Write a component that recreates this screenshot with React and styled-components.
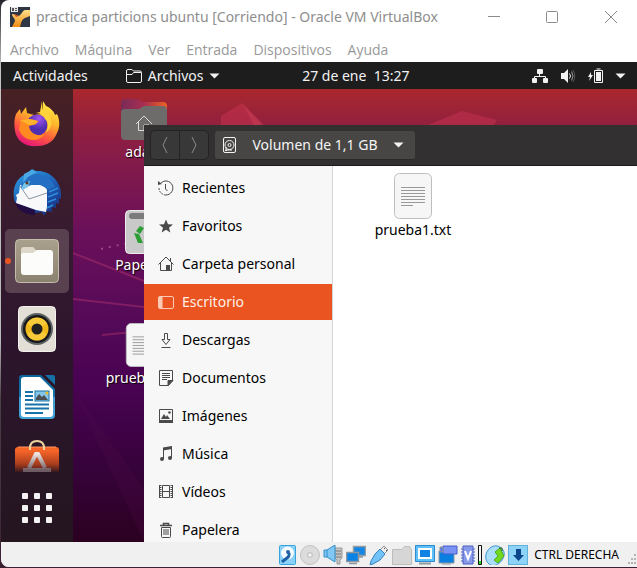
import React from "react";
import styled, { createGlobalStyle, css } from "styled-components";

const ubuntu = '"Noto Sans", "Open Sans", sans-serif';
const segoe = '"Open Sans", "Noto Sans", sans-serif';

const GlobalStyle = createGlobalStyle`
  *, *::before, *::after { box-sizing: border-box; }
  body { margin: 0; background: #3a2030; overflow: hidden; }
  button { border: 0; background: none; padding: 0; font: inherit; color: inherit; }
  svg { display: block; flex: none; }
  ul { list-style: none; margin: 0; padding: 0; }
`;

const Backdrop = styled.div`
  display: flex;
  min-height: 100vh;
  padding: 0 0 1px 1px;
  background: linear-gradient(#24222b, #c4c4c4 12%, #b9b9b9 60%, #4b4248 70%, #3b2033);
`;
const VmWindow = styled.div`
  flex: 1;
  min-width: 0;
  display: flex;
  flex-direction: column;
  overflow: hidden;
  border-radius: 8px 0 0 8px;
  background: #fff;
`;

const TitleBar = styled.header`
  display: flex;
  align-items: center;
  height: 34px;
  padding-left: 9px;
  font: 14px/20px ${ubuntu};
  color: #8e8e8e;
`;
const Title = styled.h1`
  flex: 1;
  margin: 0 0 0 6px;
  font: inherit;
  white-space: nowrap;
`;
const WindowButtons = styled.div`
  display: flex;
  gap: 46px;
  padding-right: 19px;
`;
const MenuBar = styled.nav`
  display: flex;
  align-items: center;
  gap: 16px;
  height: 28px;
  padding: 3px 9px 0 9px;
  font: 14px/20px ${segoe};
  color: #999;
`;

const TopPanel = styled.div`
  display: grid;
  grid-template-columns: auto 2fr auto 3fr auto;
  align-items: center;
  height: 27px;
  padding: 0 11px 0 12px;
  background: #1d1d1d;
  color: #f2f2f2;
  font: 14px/20px ${ubuntu};
  white-space: pre;
`;
const PanelGroup = styled.div`
  display: flex;
  align-items: center;
  gap: ${(p) => p.$gap}px;
`;
const AppMenu = styled.button`
  display: flex;
  align-items: center;
  gap: 6px;
`;
const Clock = styled.button`
  grid-column: 3;
`;
const Tray = styled(PanelGroup)`
  grid-column: 5;
`;

const Desktop = styled.main`
  position: relative;
  flex: 1;
  display: flex;
  overflow: hidden;
  background: linear-gradient(#aa282e 0, #92203e 36px, #831b4a 75px, #6b105a 140px, #600d59 190px, #540a58 230px, #480251 300px, #36033a 380px, #2b0020 453px);
`;
const Wallpaper = styled.svg`
  position: absolute;
  inset: 0;
`;
const Dock = styled.nav`
  position: relative;
  display: flex;
  flex-direction: column;
  align-items: center;
  width: 72px;
  padding-top: 4px;
  background: linear-gradient(#432023f5, #351b2ff5 33%, #2b162bf5 55%, #24161ff5);
`;
const DockItem = styled.button`
  position: relative;
  display: flex;
  align-items: center;
  justify-content: center;
  width: 64px;
  height: 64px;
  margin-bottom: 4px;
  border-radius: 5px;
  &:last-child { margin-bottom: 0; }
  ${(p) =>
    p.$active &&
    css`
      background: #594150;
      &::before {
        content: "";
        position: absolute;
        left: 0;
        width: 6px;
        height: 6px;
        border-radius: 50%;
        background: #e95420;
      }
    `}
  ${(p) =>
    p.$cut &&
    css`
      height: 39px;
      padding-top: 6px;
      align-items: flex-start;
      overflow: hidden;
    `}
`;
const DesktopIcons = styled.ul`
  position: relative;
  display: flex;
  flex-direction: column;
  gap: 36px;
  width: 142px;
  && { padding-top: 8px; }
`;
const DesktopIcon = styled.li`
  display: flex;
  flex-direction: column;
  align-items: center;
  height: 77px;
  gap: 1px;
  color: #fff;
  font: 14px/20px ${ubuntu};
  text-shadow: 1px 1px 1px #000;
  svg { height: 44px; }
`;

const FilesWindow = styled.section`
  position: absolute;
  inset: 36px 0 0 143px;
  display: flex;
  flex-direction: column;
  background: #fff;
  font: 14px/20px ${ubuntu};
`;
const HeaderBar = styled.header`
  display: flex;
  align-items: center;
  gap: 6px;
  height: 41px;
  padding: 0 6px;
  background: #323031;
  border-bottom: 1px solid #1c1b1c;
  color: #f4f4f4;
`;
const NavButtons = styled.div`
  display: flex;
  border: 1px solid #242324;
  border-radius: 5px;
  background: #393838;
`;
const NavButton = styled.button`
  display: grid;
  place-items: center;
  width: 28px;
  height: 28px;
  & + & {
    width: 29px;
    border-left: 1px solid #242324;
  }
`;
const PathButton = styled.button`
  display: flex;
  align-items: center;
  width: 200px;
  height: 29px;
  padding: 0 11px 0 8px;
  border-radius: 3px;
  background: #474644;
  border-bottom: 1px solid #2a292a;
  white-space: nowrap;
`;
const PathName = styled.span`
  flex: 1;
  text-align: center;
`;
const FilesBody = styled.div`
  flex: 1;
  min-height: 0;
  display: flex;
  overflow: hidden;
`;
const Places = styled.ul`
  display: flex;
  flex-direction: column;
  gap: 2px;
  width: 189px;
  height: 100%;
  && { padding-top: 4px; }
  border-right: 1px solid #d5d5d5;
  background: #f7f7f7;
`;
const Place = styled.a`
  display: flex;
  align-items: center;
  gap: 8px;
  height: 36px;
  padding-left: 14px;
  color: ${(p) => (p.$active ? "#fff0e9" : "#000")};
  background: ${(p) => (p.$active ? "#e95420" : "transparent")};
  text-decoration: none;
  svg { color: ${(p) => (p.$active ? "#fbc9b4" : "#4a4a4a")}; }
`;
const FileList = styled.div`
  padding: 7px 32px;
`;
const FileItem = styled.button`
  display: flex;
  flex-direction: column;
  align-items: center;
  gap: 1px;
  width: 96px;
  color: #000;
`;

const StatusBar = styled.footer`
  display: flex;
  align-items: center;
  justify-content: flex-end;
  gap: 3px;
  height: 25px;
  background: #f0f0f0;
  color: #000;
  font: 12px/16px ${ubuntu};
`;
const HostKey = styled.span`
  margin: 0 6px 0 3px;
  white-space: nowrap;
`;

const Caret = () => (
  <svg width="11" height="6" viewBox="0 0 11 6" aria-hidden="true">
    <path d="M0.5 0.5h10l-5 5z" fill="currentColor" />
  </svg>
);

const AppLogo = () => (
  <svg width="20" height="20" viewBox="0 0 20 20" aria-hidden="true">
    <defs>
      <linearGradient id="gold" x2="0" y2="1">
        <stop stopColor="#ffe08a" />
        <stop offset="1" stopColor="#ef8a10" />
      </linearGradient>
    </defs>
    <path d="M0 0h20v20H0z" fill="#2e3643" />
    <path d="M2 7c3 0 4 1 6 2 3 0 4-5 7-6h5v6l-5 2c-2 1-3 2-4 5l-1 4H2l3-6c0-3-3-4-3-7z" fill="url(#gold)" />
    <path d="M4 7l5 2-3 1z" fill="#d6511e" />
    <path d="M1 0h7v5H1z" fill="#e8e8e8" />
    <path d="M2 1h2v3H2zM5 1h2v1H5zM5 3h2v1H5z" fill="#555" />
  </svg>
);

const ArrowNav = ({ flip }) => (
  <svg width="8" height="16" viewBox="0 0 8 16" fill="none" stroke="#8c8b8b" aria-hidden="true">
    <path d={flip ? "M2 0l4 8-4 8" : "M6 0L2 8l4 8"} />
  </svg>
);

const FolderOutline = () => (
  <svg width="16" height="14" viewBox="0 0 16 14" fill="none" stroke="currentColor" aria-hidden="true">
    <path d="M.5 11V2Q.5.5 2 .5h4L7.500 2H14q1.500 0 1.500 1.500V12q0 1.500-1.500 1.500H2Q.5 13.500.5 12zM1 5.500h5L7.500 3.500h7.500" />
  </svg>
);

const Network = () => (
  <svg width="16" height="14" viewBox="0 0 16 14" fill="currentColor" aria-hidden="true">
    <rect x="5" y="0" width="6" height="5" rx="1" />
    <rect x="0" y="9" width="5" height="5" rx="1" />
    <rect x="11" y="9" width="5" height="5" rx="1" />
    <path d="M7.500 4v3M2.500 10V7.500h11V10" fill="none" stroke="currentColor" />
  </svg>
);
const Volume = () => (
  <svg width="16" height="14" viewBox="0 0 16 14" aria-hidden="true">
    <path d="M1 4h3l4-4v14l-4-4H1z" fill="currentColor" />
    <path d="M9.500 4.500q2 2.500 0 5" fill="none" stroke="currentColor" />
    <path d="M11.500 2.500q3 4.500 0 9" fill="none" stroke="#999" />
    <path d="M13 1q3.500 6 0 12" fill="none" stroke="#555" />
  </svg>
);
const Battery = () => (
  <svg width="15" height="16" viewBox="0 0 15 16" aria-hidden="true">
    <path d="M3 4L0 9h2l-1 4 4-6H3z" fill="currentColor" />
    <path d="M6.500 2.500h8v12h-8zM8.500 1h4" fill="none" stroke="currentColor" strokeWidth="1" />
    <path d="M8 4h5v9H8z" fill="currentColor" />
  </svg>
);

const Firefox = () => (
  <svg width="48" height="48" viewBox="0 1 48 48" aria-hidden="true">
    <defs>
      <linearGradient id="ffBody" x1=".8" y1="0" x2=".35" y2="1">
        <stop stopColor="#fff44a" />
        <stop offset=".4" stopColor="#ffb52b" />
        <stop offset=".7" stopColor="#ff5a3c" />
        <stop offset="1" stopColor="#e61878" />
      </linearGradient>
      <radialGradient id="ffCore" cx=".6" cy=".2">
        <stop stopColor="#a356f0" />
        <stop offset="1" stopColor="#4f2fb0" />
      </radialGradient>
    </defs>
    <path d="M3 14l4-5 1 5 5-7 1 6 7 2 8-1 1-13 3 5c5 2 8 6 9 9l2-1c3 6 3 13 0 19-3 8-10 13-19 13C13 47 4 42 2 31 1 25 1 19 3 14z" fill="url(#ffBody)" />
    <circle cx="24" cy="25" r="10.500" fill="url(#ffCore)" />
    <path d="M8 20l10-1 7 2c-1 4-5 4-9 5 1 8 9 11 16 8-7 10-23 7-26-5z" fill="#ff8a22" />
    <path d="M18 14c7-3 13 1 14 5 4 3 3 9 1 14 9-7 6-20-4-24V1l-2 11z" fill="#ffd33c" />
    <path d="M7 20l9-1 9 2c-2 4-6 4-9 4z" fill="#ffb22c" />
  </svg>
);
const Thunderbird = () => (
  <svg width="48" height="48" viewBox="0 0 48 48" aria-hidden="true">
    <defs>
      <linearGradient id="tb" x1=".2" x2=".8" y2="1">
        <stop stopColor="#2e9be0" />
        <stop offset=".5" stopColor="#1d5db4" />
        <stop offset="1" stopColor="#1a2f80" />
      </linearGradient>
    </defs>
    <path d="M1 29C-1 17 5 8 13 5l6-5 4 2c13-1 24 9 25 22v6l-2-1v6l-3-1v5l-4-1v5l-5-1-3 5-2-4-9 1C9 43 2 37 1 29z" fill="url(#tb)" />
    <path d="M2 33l20 8v5C12 46 4 41 2 33z" fill="#230c42" />
    <path d="M7 16l24 0 3 2v20l-1 5-10-2L3 34l1-5-1-3 3-2z" fill="#f8f8fa" />
    <path d="M7 17l9 13 18-6" fill="none" stroke="#8b949f" />
    <path d="M8 20C8 10 16 4 25 5c8 1 14 6 17 13l-8 3c-2-4-8-6-14-5-4 0-5 2-10 4z" fill="#246fc4" />
    <path d="M8 20l3-6 6-2-2 6-5 3z" fill="#7cc6ea" />
    <path d="M11 5l8-4 5 2-9 5-5 6z" fill="#4aa9e4" />
    <circle cx="14" cy="14" r="1.500" fill="#5d381f" />
    <path d="M36 23l9-4M35 28l10-4M35 33l8-3M34 39l6-3" stroke="#2f8ddd" strokeWidth="1.500" />
  </svg>
);
const FilesApp = () => (
  <svg width="44" height="44" viewBox="0 0 44 44" aria-hidden="true">
    <defs>
      <linearGradient id="beige" x2="0" y2="1">
        <stop stopColor="#aaa18d" />
        <stop offset="1" stopColor="#8b816f" />
      </linearGradient>
    </defs>
    <rect x=".5" y=".5" width="43" height="43" rx="4" fill="url(#beige)" stroke="#c5bdab" />
    <path d="M6 11q0-3 3-3h9l4 4H36v5H6z" fill="#ddd8c9" />
    <path d="M6 16q0-2 2-2h10l4-3h13q3 0 3 3v19q0 3-3 3H9q-3 0-3-3z" fill="#fcfcfb" />
  </svg>
);
const Rhythmbox = () => (
  <svg width="38" height="46" viewBox="0 0 38 46" aria-hidden="true">
    <rect x=".5" y=".5" width="37" height="45" rx="4" fill="#e3dfd6" stroke="#f4f2ee" />
    <circle cx="19" cy="23" r="16" fill="#5d6265" />
    <circle cx="19" cy="23" r="14" fill="#17191c" />
    <circle cx="19" cy="23" r="11.500" fill="#f1b91b" />
    <path d="M9 18a11 11 0 0120 0l-10 5zM9 28a11 11 0 0020 0l-10-5z" fill="#ffda58" opacity=".5" />
    <circle cx="19" cy="23" r="5.500" fill="#202020" />
  </svg>
);
const Writer = () => (
  <svg width="38" height="46" viewBox="0 0 38 46" aria-hidden="true">
    <defs>
      <linearGradient id="wr" x2="0" y2="1">
        <stop stopColor="#0d6399" />
        <stop offset=".5" stopColor="#1677ac" />
        <stop offset=".51" stopColor="#409bd0" />
        <stop offset="1" stopColor="#43a5d8" />
      </linearGradient>
    </defs>
    <path d="M4 1h19l14 14v26q0 4-4 4H5q-4 0-4-4V4q0-3 3-3z" fill="url(#wr)" />
    <path d="M6 3h16l13 13v24q0 3-3 3H6q-3 0-3-3V6q0-3 3-3z" fill="#fff" />
    <path d="M27 1h8q2 0 2 2v8z" fill="#1671a6" />
    <path d="M7 18h8M7 22h8M7 26h8M7 30.500h24M7 34.500h24M7 39h18" stroke="#1672a8" strokeWidth="2" />
    <rect x="17" y="17" width="14" height="10" fill="#84c6e9" stroke="#1672a8" />
    <path d="M18 26v-2l3-4 3 3 2-2 4 5z" fill="#4b4f52" />
    <circle cx="29" cy="19" r="1.500" fill="#efbd22" />
  </svg>
);
const Software = () => (
  <svg width="46" height="48" viewBox="0 0 46 48" aria-hidden="true">
    <defs>
      <linearGradient id="bag" x2="0" y2="1">
        <stop offset=".1" stopColor="#f66528" />
        <stop offset=".45" stopColor="#a83d1d" />
        <stop offset=".65" stopColor="#3b1a1e" />
      </linearGradient>
      <linearGradient id="bagA" x2="0" y2="1">
        <stop stopColor="#ece5e1" />
        <stop offset="1" stopColor="#6f5c62" />
      </linearGradient>
    </defs>
    <path d="M4 8h38q3 0 3 3v35H1V11q0-3 3-3z" fill="url(#bag)" />
    <path d="M4 8h38" stroke="#ff9764" />
    <path d="M16 11v-2q0-7 7-7t7 7v2" fill="none" stroke="#f0d29f" strokeWidth="2" />
    <path d="M15 29l7-14h2l7 14M9 31h28" fill="none" stroke="url(#bagA)" strokeWidth="4" />
  </svg>
);
const AppGrid = () => (
  <svg width="30" height="30" viewBox="0 0 30 30" fill="#f4f3f3" aria-hidden="true">
    {[0, 12, 24].map((y) => [0, 12, 24].map((x) => <rect key={`${x}-${y}`} x={x} y={y} width="6" height="6" rx="1" />))}
  </svg>
);

const HomeFolder = () => (
  <svg width="48" height="44" viewBox="0 1 48 44" aria-hidden="true">
    <defs>
      <linearGradient id="tab">
        <stop stopColor="#792b57" />
        <stop offset=".5" stopColor="#a92d50" />
        <stop offset="1" stopColor="#ee6422" />
      </linearGradient>
    </defs>
    <path d="M1 7q0-4 4-4h13l5 3h20q4 0 4 4v17H1z" fill="url(#tab)" />
    <path d="M1 16q0-3 4-3h14l5-3h19q4 0 4 4v26q0 4-4 4H5q-4 0-4-4z" fill="#6d6c6b" />
    <path d="M16 28l8-8 8 8M18.500 26v8.500H29M24 34v-5h5" fill="none" stroke="#dedcda" />
  </svg>
);
const TrashIcon = () => (
  <svg width="38" height="44" viewBox="0 0 38 44" aria-hidden="true">
    <rect x=".5" y=".5" width="37" height="43" rx="4" fill="#c9c9c9" stroke="#ededed" />
    <rect x="4" y="3" width="30" height="6" rx="3" fill="#7b7b7b" />
    <path d="M11 21l4-5 4 2-4 6zM9 23l5 1 4 9h-5zM20 15l7 3 2 6-5-1zM20 30l7-4 2 4-4 4h-5z" fill="#2d9d35" />
  </svg>
);
const TextFile = () => (
  <svg width="38" height="46" viewBox="0 0 38 46" aria-hidden="true">
    <rect x=".5" y=".5" width="37" height="45" rx="5" fill="#f6f6f6" stroke="#bdbdbd" />
    <path d="M7 14.500h24M7 17.500h24M7 20.500h24M7 23.500h24M7 26.500h24M7 29.500h24M7 32.500h12" stroke="#999" />
  </svg>
);
const Disk = () => (
  <svg width="14" height="16" viewBox="0 0 14 16" fill="none" stroke="currentColor" aria-hidden="true">
    <rect x=".5" y=".5" width="12" height="15" rx="1.500" />
    <circle cx="6.500" cy="8" r="4.500" />
    <circle cx="6.500" cy="8" r="1.500" />
    <path d="M3 10v3h6M2 13.500h2" />
  </svg>
);

const placeShapes = {
  recent: (
    <>
      <path d="M2.500 3.500A7 7 0 118 15" />
      <path d="M1 8a7 7 0 007 7" strokeDasharray="2 1" />
      <path d="M0 5V1l4 3z" fill="currentColor" stroke="none" />
      <path d="M7.500 4v5l2 2" />
    </>
  ),
  star: <path d="M8 1.500l2 4.700 5 .3-4 3.200 1.400 4.800L8 11.800l-4.400 2.700L5 9.700 1 6.500l5-.3z" fill="currentColor" stroke="none" />,
  home: (
    <>
      <path d="M.5 8.500L8 1l7.500 7.500M2.500 7v7.500h11V7M12.500 2v3" />
      <path d="M8 9h4v6H8z" fill="currentColor" stroke="none" />
    </>
  ),
  desktop: (
    <>
      <rect x=".5" y="2.500" width="15" height="12" rx="1.500" />
      <path d="M1 3h3v11H1z" fill="currentColor" />
    </>
  ),
  download: <path d="M6.500 1.500h3v6H12l-4 5-4-5h2.500zM3.500 15.500h9" />,
  document: (
    <>
      <path d="M1.500.5h13v10l-4 5h-9zM4 3.500h8M4 5.500h8M4 7.500h8M4 9.500h5" />
      <path d="M10 15.500v-5h5z" fill="currentColor" />
    </>
  ),
  image: (
    <>
      <path d="M1.500 1.500h13v12h-13z" />
      <path d="M1 12h14v3H1zM3 11l3-5 2 3 1-2 3 4z" fill="currentColor" stroke="none" />
      <circle cx="11.500" cy="4.500" r="1.300" fill="currentColor" stroke="none" />
    </>
  ),
  music: (
    <>
      <path d="M5.500 13V2.500l8-1.500v11" />
      <path d="M5 1.500l9-1.500v3L5 4.500z" fill="currentColor" stroke="none" />
      <circle cx="4" cy="13" r="2" fill="currentColor" stroke="none" />
      <circle cx="12" cy="12" r="2" fill="currentColor" stroke="none" />
    </>
  ),
  video: (
    <>
      <path d="M4.500 1.500h7v12h-7zM4.500 7.500h7" />
      <path d="M2.500 1v13M13.500 1v13" strokeWidth="2" strokeDasharray="1 1" />
      <path d="M1.500 1v13M14.500 1v13" />
    </>
  ),
  trash: (
    <>
      <path d="M2 3.500h12M5.500 3V1.500h5V3" strokeWidth="1.600" />
      <path d="M3.500 5.500h9v9q0 1-1 1h-7q-1 0-1-1zM6 7v6M8 7v6M10 7v6" />
    </>
  ),
};
const PlaceIcon = ({ name }) => (
  <svg width="16" height="16" viewBox="0 0 16 16" fill="none" stroke="currentColor" aria-hidden="true">
    {placeShapes[name]}
  </svg>
);

const places = [
  ["recent", "Recientes"],
  ["star", "Favoritos"],
  ["home", "Carpeta personal"],
  ["desktop", "Escritorio"],
  ["download", "Descargas"],
  ["document", "Documentos"],
  ["image", "Imágenes"],
  ["music", "Música"],
  ["video", "Vídeos"],
  ["trash", "Papelera"],
];

const deviceShapes = [
  ["Disco duro", 20, <>
    <rect x="2.500" y=".5" width="16" height="19" rx="1" fill="#8bd0f7" stroke="#35a3dc" />
    <circle cx="10.500" cy="8" r="6.500" fill="#f5fbff" />
    <circle cx="11" cy="7" r="2" fill="#2b62a5" />
    <path d="M12 8c1 5-3 5-7 9" fill="none" stroke="#1b5fa6" strokeWidth="3" />
  </>],
  ["Unidad óptica", 20, <>
    <circle cx="10" cy="10" r="9.500" fill="#dcdcdc" stroke="#c2c2c2" />
    <circle cx="10" cy="10" r="3" fill="#cacaca" />
    <circle cx="10" cy="10" r="1.500" fill="#f7f7f7" />
  </>],
  ["Audio", 20, <>
    <path d="M12 3h7v10l-2 2v4h-3v-4l-2-2z" fill="#c5c5c5" stroke="#999" />
    <path d="M13 6h5M13 9h5M13 12h5" stroke="#777" />
    <path d="M1 5h3l8-5v17l-8-5H1z" fill="#83c8f5" stroke="#318dc9" />
    <path d="M4 5v7" stroke="#318dc9" />
  </>],
  ["Red", 20, <>
    <path d="M7.500 1.500h12v9h-12zM11 12h6" fill="#1387e3" stroke="#939ca3" strokeWidth="1.500" />
    <path d="M.5 7.500h12v9H.5zM3 18.500h8" fill="#0882e4" stroke="#8d969e" strokeWidth="1.500" />
  </>],
  ["USB", 20, <>
    <path d="M11 5l4-4 4 4-4 4z" fill="#eee" stroke="#929292" />
    <path d="M11 4l5 5-5 6-7 4-3 1 1-4 4-7z" fill="#71c3f8" stroke="#3682bf" />
    <path d="M15 3l1 1M17 5l1 1" stroke="#555" />
  </>],
  ["Carpetas compartidas", 20, <path d="M.5 19.500v-15h9l3-3h5l2 3v15z" fill="#d6d6d6" stroke="#bcbcbc" />],
  ["Pantalla", 20, <>
    <path d="M.5.5h19v16H.5z" fill="#5dc0fb" stroke="#2b8bd0" />
    <path d="M4 4h12v9H4z" fill="#1181e3" stroke="#fff" strokeWidth="2" />
    <path d="M4 18.500h12" stroke="#909aa1" strokeWidth="2" />
  </>],
  ["Grabación", 20, <>
    <path d="M1 6h15v12H1z" fill="#087fe1" stroke="#8f989f" />
    <path d="M5 1h14v8H5z" fill="#7992f3" stroke="#465fca" />
    <path d="M2 2h3v5H2zM4 19h9" fill="#5976e6" stroke="#8f989f" />
  </>],
  ["Virtualización", 14, <>
    <path d="M2 1h10v18H2z" fill="#879ae9" stroke="#4e61c4" />
    <path d="M0 4h2M0 7h2M0 10h2M0 13h2M0 16h2M12 4h2M12 7h2M12 10h2M12 13h2M12 16h2" stroke="#4e61c4" />
    <path d="M4 6l3 8 3-8" fill="none" stroke="#fff" strokeWidth="2" />
  </>],
  ["Carga del procesador", 4, <>
    <path d="M.5.5h3v19h-3z" fill="#f7f7f7" stroke="#111" />
    <path d="M1 16h2v3H1z" fill="#2fdd22" />
  </>],
  ["Integración del ratón", 20, <>
    <path d="M4 19C-1 15 0 7 5 3s10-2 13 2 0 11-5 14-7 1-9 0z" fill="#a9ddfa" stroke="#3c95ce" />
    <path d="M10 7l5-4 4 8-6 7-4-3 4-4z" fill="#73d91e" stroke="#4aaa20" />
    <path d="M14 3h3v3" stroke="#245b25" fill="none" />
  </>],
  ["Captura del teclado", 20, <>
    <rect x=".5" y=".5" width="19" height="19" fill="#8dd3f7" stroke="#5eb2dc" />
    <path d="M8 4h5v6h3l-5.500 6L5 10h3z" fill="#0b458b" />
  </>],
];

const dockApps = [
  ["Firefox", Firefox],
  ["Thunderbird", Thunderbird],
  ["Archivos", FilesApp],
  ["Rhythmbox", Rhythmbox],
  ["LibreOffice Writer", Writer],
];

export default function App() {
  return (
    <>
      <GlobalStyle />
      <Backdrop>
        <VmWindow>
          <TitleBar>
            <AppLogo />
            <Title>practica particions ubuntu [Corriendo] - Oracle VM VirtualBox</Title>
            <WindowButtons>
              <button aria-label="Minimizar">
                <svg width="12" height="12" viewBox="0 0 12 12" stroke="#8b8b8b"><path d="M0 5.500h12" /></svg>
              </button>
              <button aria-label="Maximizar">
                <svg width="12" height="12" viewBox="0 0 12 12" fill="none" stroke="#8b8b8b"><rect x=".5" y=".5" width="11" height="11" rx="1" /></svg>
              </button>
              <button aria-label="Cerrar">
                <svg width="14" height="12" viewBox="0 0 14 12" stroke="#8b8b8b"><path d="M1 0l12 12M13 0L1 12" /></svg>
              </button>
            </WindowButtons>
          </TitleBar>
          <MenuBar>
            {["Archivo", "Máquina", "Ver", "Entrada", "Dispositivos", "Ayuda"].map((m) => (
              <button key={m}>{m}</button>
            ))}
          </MenuBar>

          <TopPanel>
            <PanelGroup $gap={38}>
              <button>Actividades</button>
              <AppMenu>
                <FolderOutline />
                Archivos
                <Caret />
              </AppMenu>
            </PanelGroup>
            <Clock>27 de ene  13:27</Clock>
            <Tray $gap={12}>
              <Network />
              <Volume />
              <Battery />
              <Caret />
            </Tray>
          </TopPanel>

          <Desktop>
            <Wallpaper width="100%" height="100%" aria-hidden="true">
              <path d="M220 36V27l21-13 20 22z" fill="#bd304b" opacity=".65" />
              <path d="M241 14l22 22h-10z" fill="#d1445b" opacity=".4" />
              <path d="M427 36l34-14 35 9-3 5z" fill="#bb304d" opacity=".65" />
              <path d="M72 164l71 28M72 210l71 8M101 246l42-4" stroke="#a32e6c" strokeWidth="2" opacity=".55" />
              <path d="M100 160l45-10" stroke="#bd6aa0" strokeWidth="2" strokeDasharray="2 6" opacity=".6" />
              <path d="M72 300l71 153H143V400z" fill="#53104d" opacity=".2" />
            </Wallpaper>
            <Dock>
              {dockApps.map(([name, Icon]) => (
                <DockItem key={name} aria-label={name} $active={name === "Archivos"}>
                  <Icon />
                </DockItem>
              ))}
              <DockItem aria-label="Software de Ubuntu" $cut>
                <Software />
              </DockItem>
              <DockItem aria-label="Mostrar aplicaciones">
                <AppGrid />
              </DockItem>
            </Dock>
            <DesktopIcons>
              <DesktopIcon>
                <HomeFolder />
                adam
              </DesktopIcon>
              <DesktopIcon>
                <TrashIcon />
                Papelera
              </DesktopIcon>
              <DesktopIcon>
                <TextFile />
                prueba1.txt
              </DesktopIcon>
            </DesktopIcons>

            <FilesWindow>
              <HeaderBar>
                <NavButtons>
                  <NavButton aria-label="Atrás"><ArrowNav /></NavButton>
                  <NavButton aria-label="Adelante"><ArrowNav flip /></NavButton>
                </NavButtons>
                <PathButton>
                  <Disk />
                  <PathName>Volumen de 1,1 GB</PathName>
                  <Caret />
                </PathButton>
              </HeaderBar>
              <FilesBody>
                <Places>
                  {places.map(([icon, label]) => (
                    <li key={icon}>
                      <Place href="#" $active={icon === "desktop"}>
                        <PlaceIcon name={icon} />
                        {label}
                      </Place>
                    </li>
                  ))}
                </Places>
                <FileList>
                  <FileItem>
                    <TextFile />
                    prueba1.txt
                  </FileItem>
                </FileList>
              </FilesBody>
            </FilesWindow>
          </Desktop>

          <StatusBar>
            {deviceShapes.map(([label, width, shape]) => (
              <svg key={label} role="img" aria-label={label} width={width} height="20" viewBox={`0 0 ${width} 20`}>
                {shape}
              </svg>
            ))}
            <HostKey>CTRL DERECHA</HostKey>
            <svg width="9" height="20" viewBox="0 0 9 20" fill="#b5b5b5" aria-hidden="true">
              <path d="M6 9h2v2H6zM3 13h2v2H3zM6 13h2v2H6zM0 17h2v2H0zM3 17h2v2H3zM6 17h2v2H6z" />
            </svg>
          </StatusBar>
        </VmWindow>
      </Backdrop>
    </>
  );
}
